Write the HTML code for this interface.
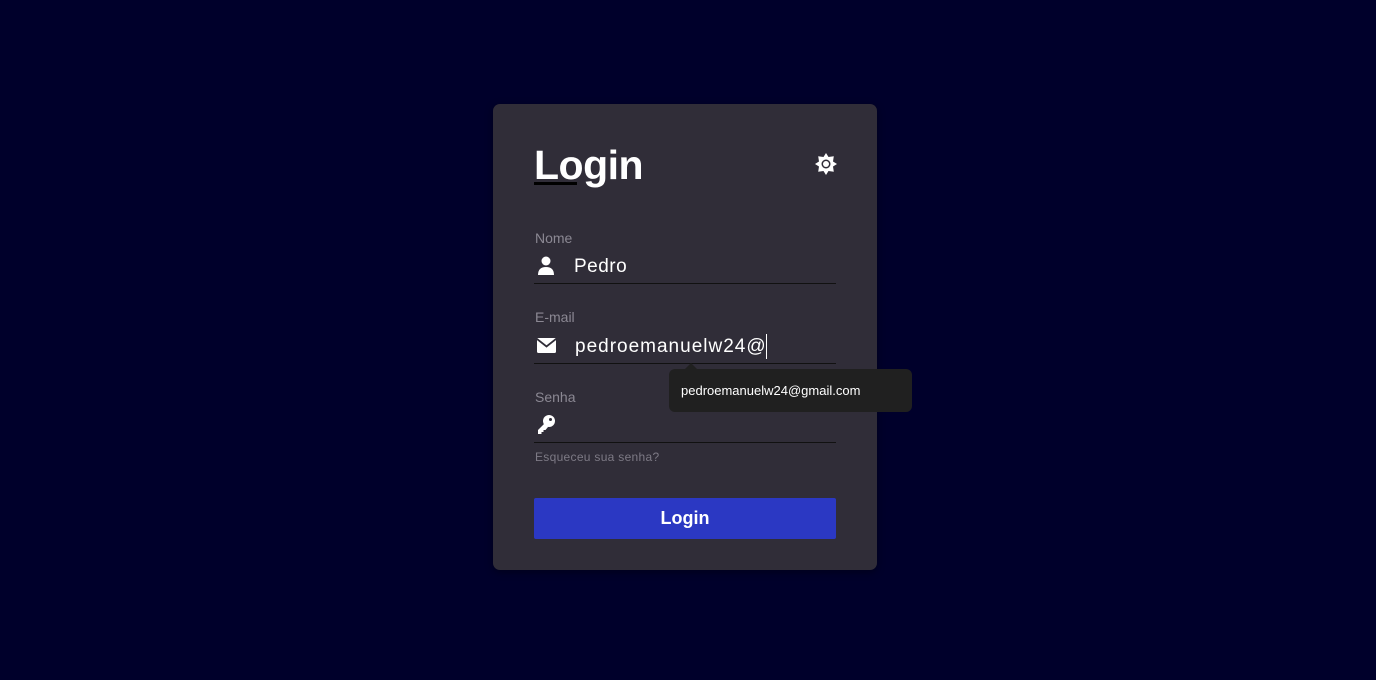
<!DOCTYPE html>
<html><head><style>
html,body{margin:0;padding:0;width:1376px;height:680px;background:#00002b;overflow:hidden;font-family:"Liberation Sans",sans-serif;}
.card{position:absolute;left:493px;top:104px;width:384px;height:466px;background:#302d38;border-radius:7px;box-shadow:0 2px 8px rgba(0,0,0,.4);}
.title{position:absolute;left:534px;top:140px;font-size:41px;font-weight:bold;color:#fff;letter-spacing:-0.5px;line-height:50px;}
.uline{position:absolute;left:534px;top:182px;width:43px;height:3px;background:#000;}
.lbl{position:absolute;left:535px;font-size:14px;color:#8b8893;}
.val{position:absolute;left:574px;font-size:19px;color:#fff;}
.line{position:absolute;left:534px;width:302px;height:1px;background:#111;}
.btn{position:absolute;left:534px;top:498px;width:302px;height:41px;background:#2b38c3;border-radius:2px;color:#fff;font-weight:bold;font-size:18px;text-align:center;line-height:41px;}
.tip{position:absolute;left:669px;top:369px;width:243px;height:43px;background:#202020;border-radius:6px;color:#fff;font-size:13px;line-height:44px;box-sizing:border-box;padding-left:12px;}
.arr{position:absolute;left:684px;top:363px;width:0;height:0;border-left:7px solid transparent;border-right:7px solid transparent;border-bottom:7px solid #202020;}
</style></head><body>
<div class="card"></div>
<div class="title">Login</div>
<div class="uline"></div>
<svg style="position:absolute;left:815px;top:153px" width="22" height="22" viewBox="0 0 22 22"><g fill="#fff"><polygon points="11,0 13.5,4 18.8,3.2 18,8.5 22,11 18,13.5 18.8,18.8 13.5,18 11,22 8.5,18 3.2,18.8 4,13.5 0,11 4,8.5 3.2,3.2 8.5,4"/></g><circle cx="11" cy="11" r="4.5" fill="#302d38"/><circle cx="11" cy="11" r="3" fill="#fff"/></svg>
<div class="lbl" style="top:230px">Nome</div>
<svg style="position:absolute;left:537px;top:256px" width="18" height="19" viewBox="0 0 18 19"><circle cx="9" cy="5" r="4.5" fill="#fff"/><path d="M1 19 Q1 11 9 11 Q17 11 17 19Z" fill="#fff"/></svg>
<div class="val" style="top:256px;letter-spacing:0.5px">Pedro</div>
<div class="line" style="top:283px"></div>
<div class="lbl" style="top:309px">E-mail</div>
<svg style="position:absolute;left:537px;top:338px" width="19" height="15" viewBox="0 0 19 15"><rect x="0" y="0" width="19" height="15" rx="1.5" fill="#fff"/><path d="M0 1 L9.5 8.5 L19 1" stroke="#302d38" stroke-width="1.8" fill="none"/></svg>
<div class="val" style="top:336px;left:575px;letter-spacing:1px">pedroemanuelw24@</div>
<div style="position:absolute;left:766px;top:334px;width:1px;height:25px;background:#fff"></div>
<div class="line" style="top:363px"></div>
<div class="lbl" style="top:389px">Senha</div>
<svg style="position:absolute;left:537px;top:415px" width="18" height="19" viewBox="0 0 18 19"><circle cx="12" cy="6" r="6" fill="#fff"/><circle cx="13.5" cy="4.5" r="1.5" fill="#302d38"/><path d="M8 8 L1 15 L1 19 L4.5 19 L4.5 17 L6.5 17 L6.5 15 L8.5 15 L11 12Z" fill="#fff"/></svg>
<div class="line" style="top:442px"></div>
<div class="lbl" style="top:450px;font-size:12px;color:#7d7a85;letter-spacing:0.3px">Esqueceu sua senha?</div>
<div class="btn">Login</div>
<div class="arr"></div>
<div class="tip">pedroemanuelw24@gmail.com</div>
</body></html>
